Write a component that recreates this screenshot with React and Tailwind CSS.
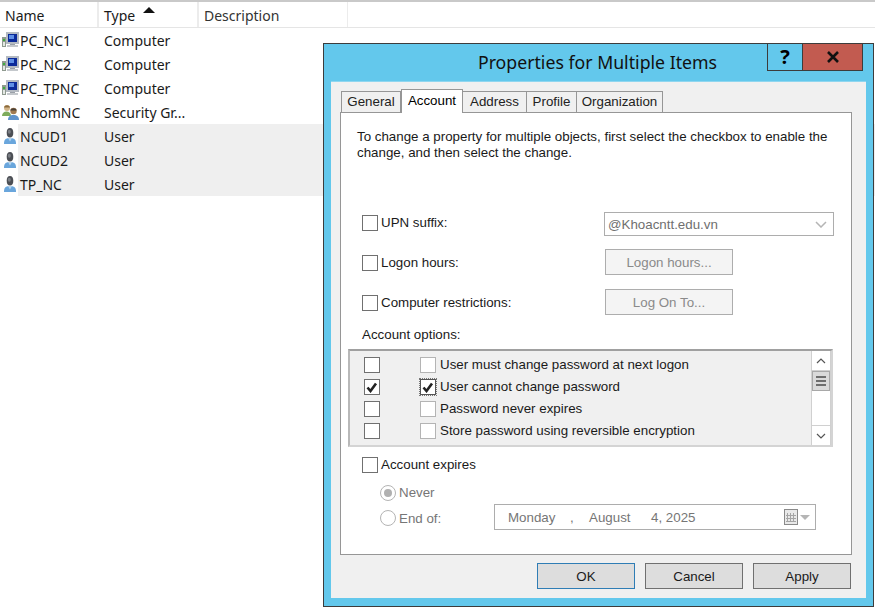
import React from 'react';

const rows = [
  { name: 'PC_NC1', type: 'Computer', icon: 'pc' },
  { name: 'PC_NC2', type: 'Computer', icon: 'pc' },
  { name: 'PC_TPNC', type: 'Computer', icon: 'pc' },
  { name: 'NhomNC', type: 'Security Gr...', icon: 'group' },
  { name: 'NCUD1', type: 'User', icon: 'user', sel: true },
  { name: 'NCUD2', type: 'User', icon: 'user', sel: true },
  { name: 'TP_NC', type: 'User', icon: 'user', sel: true },
];

// last row is scrolled mostly out of view, only the tops of its boxes show
const options = [
  { label: 'User must change password at next logon' },
  { label: 'User cannot change password', checked: true },
  { label: 'Password never expires' },
  { label: 'Store password using reversible encryption' },
  { label: '' },
];

function PcIcon() {
  return (
    <svg width="17" height="16" viewBox="0 0 17 16" className="shrink-0">
      <rect x="0" y="5" width="4" height="10" fill="#8f9a8f" />
      <rect x="1" y="7" width="2" height="2" fill="#3fae3f" />
      <rect x="1" y="10" width="2" height="4" fill="#e4e8e4" />
      <rect x="4" y="0" width="13" height="12" fill="#b4bac2" />
      <rect x="6" y="2" width="9" height="8" fill="#0b2a9a" />
      <rect x="7" y="3" width="5" height="4" fill="#5f8fe6" />
      <rect x="8" y="12" width="5" height="1" fill="#9aa0a8" />
      <rect x="5" y="13" width="11" height="2" fill="#c4c8cc" />
    </svg>
  );
}

function UserIcon() {
  return (
    <svg width="12" height="16" viewBox="0 0 12 16" className="shrink-0">
      <path d="M0 16c-.3-4 1.500-6 6-6s6.300 2 6 6z" fill="#6aa6dc" />
      <path d="M4 10h4l-2 3.500z" fill="#b4d4ee" />
      <ellipse cx="6" cy="4.800" rx="3.300" ry="4.800" fill="#4c4f55" />
      <ellipse cx="5.300" cy="3.800" rx="1.500" ry="2" fill="#7a7e84" />
    </svg>
  );
}

function GroupIcon() {
  return (
    <svg width="17" height="16" viewBox="0 0 17 16" className="shrink-0">
      <path d="M0 12c0-3 2-4.500 4.500-4.500S9 9 9 12z" fill="#7eab5c" />
      <circle cx="5" cy="4" r="3" fill="#d2b488" />
      <path d="M2 3.500C2.500 .5 7.500 .5 8 3.500z" fill="#8a6a3c" />
      <path d="M6 16c0-3.500 2-5 5.500-5s5.500 1.500 5.500 5z" fill="#5f93cc" />
      <circle cx="11.500" cy="7" r="3.200" fill="#a07a50" />
      <path d="M8.300 6.500c.5-3 5.900-3 6.400 0z" fill="#4a4036" />
    </svg>
  );
}

function Check({ className = 'border-[#707070]', checked, focus }) {
  return (
    <div className={`relative w-4 h-4 border bg-white shrink-0 flex items-center justify-center ${className}`}>
      {focus && <div className="absolute -inset-[2px] border border-dotted border-[#777]" />}
      {checked && (
        <svg width="12" height="11" viewBox="0 0 12 11">
          <path d="M1.500 5.500 4.500 9 10 1.500" fill="none" stroke="#222" strokeWidth="2.600" />
        </svg>
      )}
    </div>
  );
}

function Radio({ on }) {
  return (
    <div className="w-4 h-4 rounded-full border border-[#b4b4b4] bg-white shrink-0 flex items-center justify-center">
      {on && <div className="w-2 h-2 rounded-full bg-[#b0b0b0]" />}
    </div>
  );
}

function Tab({ label, active, w }) {
  return active ? (
    <div className={`${w} h-[24px] -mb-px relative z-10 bg-white border border-b-0 border-[#969696] flex items-start justify-center pt-[1px] text-black`}>
      {label}
    </div>
  ) : (
    <div className={`${w} h-[21px] bg-[#f0f0f0] border border-b-0 border-[#969696] flex items-center justify-center -ml-px first:ml-0`}>
      {label}
    </div>
  );
}

function FooterButton({ label, primary }) {
  return (
    <div className={`w-[98px] h-[26px] bg-[#dddddd] border flex items-center justify-center pt-[1px] ${primary ? 'border-[#2f7db5]' : 'border-[#707070]'}`}>
      {label}
    </div>
  );
}

export default function App() {
  return (
    <div className="relative w-[875px] h-[608px] overflow-hidden bg-white text-[#1a1a1a] font-['Liberation_Sans',sans-serif]">
      {/* list behind the dialog */}
      <div className="border-t-2 border-[#c9c9c9] font-['Noto_Sans',sans-serif] text-[14px]">
        <div className="flex h-[26px] border-b border-[#e5e5e5]">
          <div className="w-[99px] pl-[5px] pt-[1px] border-r-2 border-[#ececec] flex items-center">Name</div>
          <div className="relative w-[100px] pl-[5px] pt-[1px] border-r-2 border-[#ececec] flex items-center">
            Type
            <svg width="12" height="6" viewBox="0 0 12 6" className="absolute left-[44px] top-[5px]">
              <path d="M0 6 6 0l6 6z" fill="#111" />
            </svg>
          </div>
          <div className="w-[149px] pl-[5px] pt-[1px] border-r border-[#ececec] flex items-center text-[#333]">Description</div>
        </div>
        <div>
          {rows.map((r) => (
            <div key={r.name} className="flex h-[24px] items-center">
              <div className="w-[18px] flex justify-center shrink-0 pl-[2px]">
                {r.icon === 'pc' && <PcIcon />}
                {r.icon === 'group' && <GroupIcon />}
                {r.icon === 'user' && <UserIcon />}
              </div>
              <div className={`flex-1 h-full flex items-center pl-[2px] ${r.sel ? 'bg-[#efefef]' : ''}`}>
                <div className="w-[84px]">{r.name}</div>
                <div>{r.type}</div>
              </div>
            </div>
          ))}
        </div>
      </div>

      {/* dialog */}
      <div className="absolute left-[323px] top-[43px] w-[551px] h-[564px] border border-[#3c3c3c] bg-[#63c8ec] flex flex-col text-[13.33px]">
        <div className="relative h-[37px] shrink-0 flex items-center justify-center pr-[2px] text-[17.7px] text-[#111] font-['Noto_Sans',sans-serif]">
          <span>Properties for Multiple Items</span>
          <div className="absolute left-[443px] top-0 flex h-[27px] border border-t-0 border-[#3c3c3c]">
            <div className="w-[35px] border-r border-[#3c3c3c] flex items-center justify-center font-bold text-[20px] text-black">?</div>
            <div className="w-[59px] bg-[#c25b50] flex items-center justify-center">
              <svg width="12" height="12" viewBox="0 0 12 12">
                <path d="M1 1l10 10M11 1 1 11" stroke="#111" strokeWidth="2.600" />
              </svg>
            </div>
          </div>
        </div>

        <div className="mx-[7px] flex-1 bg-[#f0f0f0] border-t border-[#8fd6ef] mb-[8px] flex flex-col">
          <div className="flex items-end pl-[10px] mt-[6px] h-[24px] text-[#222]">
            <Tab label="General" w="w-[60px]" />
            <Tab label="Account" w="w-[62px]" active />
            <Tab label="Address" w="w-[65px]" />
            <Tab label="Profile" w="w-[51px]" />
            <Tab label="Organization" w="w-[87px]" />
          </div>

          <div className="ml-[9px] w-[512px] h-[443px] bg-white border border-[#969696] pl-[16px] relative">
            <p className="mt-[16px] w-[480px] leading-[16px] text-[#1a1a1a]">
              To change a property for multiple objects, first select the checkbox to enable the change, and then select the change.
            </p>

            <div className="mt-[50px] ml-[5px] flex items-center h-[24px] w-[472px]">
              <Check />
              <span className="ml-[3px] flex-1">UPN suffix:</span>
              <div className="w-[230px] h-[24px] mt-[2px] bg-white border border-[#adadad] flex items-center pl-[3px] pr-[6px] text-[#6f6f6f]">
                <span className="flex-1 pt-[1px]">@Khoacntt.edu.vn</span>
                <svg width="12" height="7" viewBox="0 0 12 7">
                  <path d="M1 1l5 5 5-5" fill="none" stroke="#b5b5b5" strokeWidth="1.500" />
                </svg>
              </div>
            </div>

            <div className="mt-[15px] ml-[5px] flex items-center h-[26px]">
              <Check />
              <span className="ml-[3px] w-[224px]">Logon hours:</span>
              <div className="w-[128px] h-[26px] mb-[2px] pt-[2px] bg-[#f4f4f4] border border-[#adadad] flex items-center justify-center text-[#8a8a8a]">Logon hours...</div>
            </div>

            <div className="mt-[14px] ml-[5px] flex items-center h-[26px]">
              <Check />
              <span className="ml-[3px] w-[224px]">Computer restrictions:</span>
              <div className="w-[128px] h-[26px] mb-[2px] pt-[2px] bg-[#f4f4f4] border border-[#adadad] flex items-center justify-center text-[#8a8a8a]">Log On To...</div>
            </div>

            <div className="mt-[11px] ml-[5px] h-[16px] leading-[16px]">Account options:</div>

            {/* account options list */}
            <div className="mt-[6px] -ml-[9px] w-[485px] h-[98px] flex bg-[#f0f0f0] border-2 border-[#a0a0a0] border-r-[#d4d4d4] border-b-[#d4d4d4] border-l-[#b8b8b8]">
              <div className="flex-1 overflow-hidden pt-[3px]">
                {options.map((o, i) => (
                  <div key={i} className="flex items-center h-[22px] shrink-0">
                    <div className="ml-[14px]">
                      <Check checked={o.checked} />
                    </div>
                    <div className="ml-[40px]">
                      <Check className={o.checked ? 'border-[#555]' : 'border-[#b4b4b4]'} checked={o.checked} focus={o.checked} />
                    </div>
                    <span className="ml-[4px]">{o.label}</span>
                  </div>
                ))}
              </div>
              <div className="w-[20px] shrink-0 bg-white border-x border-[#d0d0d0] flex flex-col">
                <div className="h-[20px] border-b border-[#d0d0d0] flex items-center justify-center">
                  <svg width="10" height="6" viewBox="0 0 10 6"><path d="M1 5l4-4 4 4" fill="none" stroke="#555" strokeWidth="1.200" /></svg>
                </div>
                <div className="h-[20px] bg-[#dadada] border border-[#a8a8a8] flex flex-col items-center justify-center gap-[2px]">
                  <div className="w-[10px] h-[2px] bg-[#6e6e6e]" />
                  <div className="w-[10px] h-[2px] bg-[#6e6e6e]" />
                  <div className="w-[10px] h-[2px] bg-[#6e6e6e]" />
                </div>
                <div className="flex-1" />
                <div className="h-[20px] border-t border-[#d0d0d0] flex items-center justify-center">
                  <svg width="10" height="6" viewBox="0 0 10 6"><path d="M1 1l4 4 4-4" fill="none" stroke="#555" strokeWidth="1.200" /></svg>
                </div>
              </div>
            </div>

            <div className="mt-[10px] ml-[5px] flex items-center h-[16px]">
              <Check />
              <span className="ml-[3px]">Account expires</span>
            </div>

            <div className="mt-[12px] ml-[23px] flex items-center h-[16px] text-[#767676]">
              <Radio on />
              <span className="ml-[3px]">Never</span>
            </div>

            <div className="mt-[4px] ml-[23px] flex items-center h-[26px] text-[#767676]">
              <Radio />
              <span className="ml-[3px] w-[95px] pt-[1px]">End of:</span>
              <div className="w-[322px] h-[26px] mb-[2px] border border-[#adadad] flex items-center pl-[13px] pr-[5px]">
                <span className="w-[62px] pt-[1px]">Monday</span>
                <span className="w-[19px] pt-[1px]">,</span>
                <span className="w-[62px] pt-[1px]">August</span>
                <span className="flex-1 pt-[1px]">4, 2025</span>
                <svg width="14" height="16" viewBox="0 0 14 16">
                  <rect x="0.500" y="0.500" width="13" height="15" fill="#e9e9e9" stroke="#8a8a8a" />
                  <path d="M3.500 4v9M6.500 4v9M9.500 4v9M2 6.500h10M2 9.500h10M2 12.500h10" stroke="#a5a5a5" strokeWidth="1" />
                </svg>
                <svg width="10" height="5" viewBox="0 0 10 5" className="ml-[2px]"><path d="M0 0h10L5 5z" fill="#b5b5b5" /></svg>
              </div>
            </div>
          </div>

          <div className="mt-[8px] mr-[15px] flex justify-end gap-[10px] text-[#1a1a1a]">
            <FooterButton label="OK" primary />
            <FooterButton label="Cancel" />
            <FooterButton label="Apply" />
          </div>
        </div>
      </div>
    </div>
  );
}
